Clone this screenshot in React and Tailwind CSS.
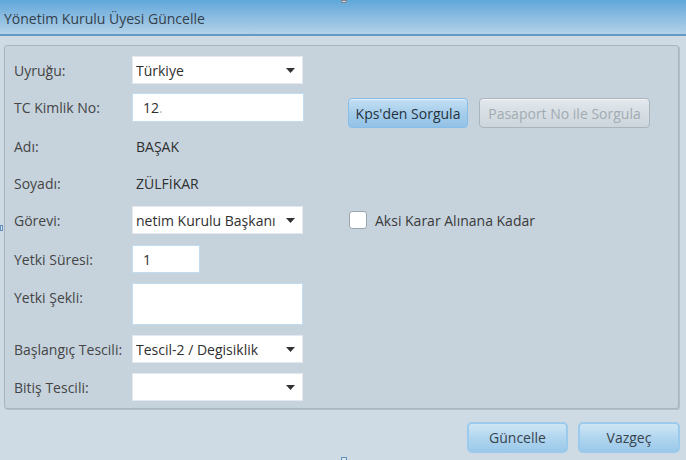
import React from 'react';

// small dropdown arrow
const Arrow = () => (
  <svg width="9" height="5" viewBox="0 0 9 5" className="shrink-0">
    <path d="M0 0h9L4.5 5z" fill="#333" />
  </svg>
);

const Select = ({ value }) => (
  <div className="w-[171px] h-[28px] bg-white border border-[#e3e9ee] flex items-center justify-between pl-[3px] pr-[7px] overflow-hidden">
    <span className="whitespace-nowrap overflow-hidden text-[#2f2f2f]">{value}</span>
    <Arrow />
  </div>
);

const Label = ({ children, className = '' }) => (
  <div className={`w-[118px] shrink-0 text-[#454545] ${className}`}>{children}</div>
);

const App = () => {
  return (
    <div className="relative w-[686px] h-[460px] overflow-hidden bg-[#cfdbe4] font-['Open_Sans',sans-serif] text-[14px]">
      {/* Title bar */}
      <div className="h-[36px] bg-gradient-to-b from-[#5fa7db] to-[#b3d1e7] border-b-2 border-[#6598c4] flex items-center pl-[4px] pt-[2px]">
        <span className="text-[#34404a] text-[14px]">Yönetim Kurulu Üyesi Güncelle</span>
      </div>

      {/* Form panel */}
      <div className="ml-[4px] mt-[9px] w-[675px] h-[364px] bg-[#c6d3dd] border border-[#a8b4be] rounded-[3px] shadow-[1px_1px_0_#b4bec6] pl-[9px] pt-[10px]">
        {/* Uyruğu */}
        <div className="flex items-center h-[28px]">
          <Label>Uyruğu:</Label>
          <Select value="Türkiye" />
        </div>

        {/* TC Kimlik No */}
        <div className="flex items-start mt-[9px] h-[30px]">
          <Label className="leading-[29px]">TC Kimlik No:</Label>
          <div className="w-[172px] h-[29px] bg-white border border-[#c2dcf0] flex items-center pl-[10px] text-[#2f2f2f]">
            12<span className="text-[#bbb]">.</span>
          </div>
          <button className="ml-[44px] mt-[5px] w-[120px] h-[30px] rounded-[4px] border border-[#86bde8] bg-gradient-to-b from-[#c4e0f3] via-[#a6cdeb] to-[#93c2e6] text-[#26323c] shadow-[inset_0_1px_0_#e0f0fb] whitespace-nowrap">
            Kps'den Sorgula
          </button>
          <button className="ml-[11px] mt-[5px] w-[171px] h-[30px] rounded-[4px] border border-[#aab4bc] bg-gradient-to-b from-[#e2e8ec] to-[#ccd5dc] text-[#a2abb2] shadow-[inset_0_1px_0_#f0f4f6] whitespace-nowrap">
            Pasaport No ile Sorgula
          </button>
        </div>

        {/* Adı */}
        <div className="flex items-center mt-[9px] h-[28px]">
          <Label>Adı:</Label>
          <span className="pl-[4px] text-[#2f2f2f]">BAŞAK</span>
        </div>

        {/* Soyadı */}
        <div className="flex items-center mt-[9px] h-[28px]">
          <Label>Soyadı:</Label>
          <span className="pl-[4px] text-[#2f2f2f]">ZÜLFİKAR</span>
        </div>

        {/* Görevi */}
        <div className="flex items-center mt-[9px] h-[28px]">
          <Label>Görevi:</Label>
          <Select value="netim Kurulu Başkanı" />
          <div className="ml-[46px] w-[18px] h-[18px] bg-white border border-[#9aa6b0] rounded-[3px]" />
          <span className="ml-[8px] text-[#3a3a3a]">Aksi Karar Alınana Kadar</span>
        </div>

        {/* Yetki Süresi */}
        <div className="flex items-center mt-[11px] h-[28px]">
          <Label>Yetki Süresi:</Label>
          <div className="w-[68px] h-[28px] bg-white border border-[#c2dcf0] flex items-center pl-[10px] text-[#2f2f2f]">
            1
          </div>
        </div>

        {/* Yetki Şekli */}
        <div className="flex items-start mt-[10px] h-[42px]">
          <Label className="pt-[4px]">Yetki Şekli:</Label>
          <div className="w-[171px] h-[42px] bg-white border border-[#c2dcf0]" />
        </div>

        {/* Başlangıç Tescili */}
        <div className="flex items-center mt-[10px] h-[28px]">
          <Label className="whitespace-nowrap">Başlangıç Tescili:</Label>
          <Select value="Tescil-2 / Degisiklik" />
        </div>

        {/* Bitiş Tescili */}
        <div className="flex items-center mt-[10px] h-[28px]">
          <Label>Bitiş Tescili:</Label>
          <Select value="" />
        </div>
      </div>

      {/* Footer buttons */}
      <div className="flex justify-end gap-[10px] pr-[6px] mt-[13px]">
        <button className="w-[101px] h-[31px] rounded-[5px] border-2 border-[#9ccaec] bg-gradient-to-b from-[#d0e6f5] via-[#b1d6ef] to-[#9cc9ea] text-[#38444e]">
          Güncelle
        </button>
        <button className="w-[102px] h-[31px] rounded-[5px] border-2 border-[#9ccaec] bg-gradient-to-b from-[#d0e6f5] via-[#b1d6ef] to-[#9cc9ea] text-[#38444e]">
          Vazgeç
        </button>
      </div>

      {/* resize handles */}
      <div className="absolute left-[341px] top-0 w-[6px] h-[3px] bg-[#c9d2da] border border-[#7b8791]" />
      <div className="absolute left-0 top-[225px] w-[3px] h-[6px] bg-[#dde6ee] border border-[#5f8fbd]" />
      <div className="absolute left-[341px] top-[457px] w-[6px] h-[4px] bg-[#dde6ee] border border-[#5f8fbd]" />
    </div>
  );
};

export default App;
